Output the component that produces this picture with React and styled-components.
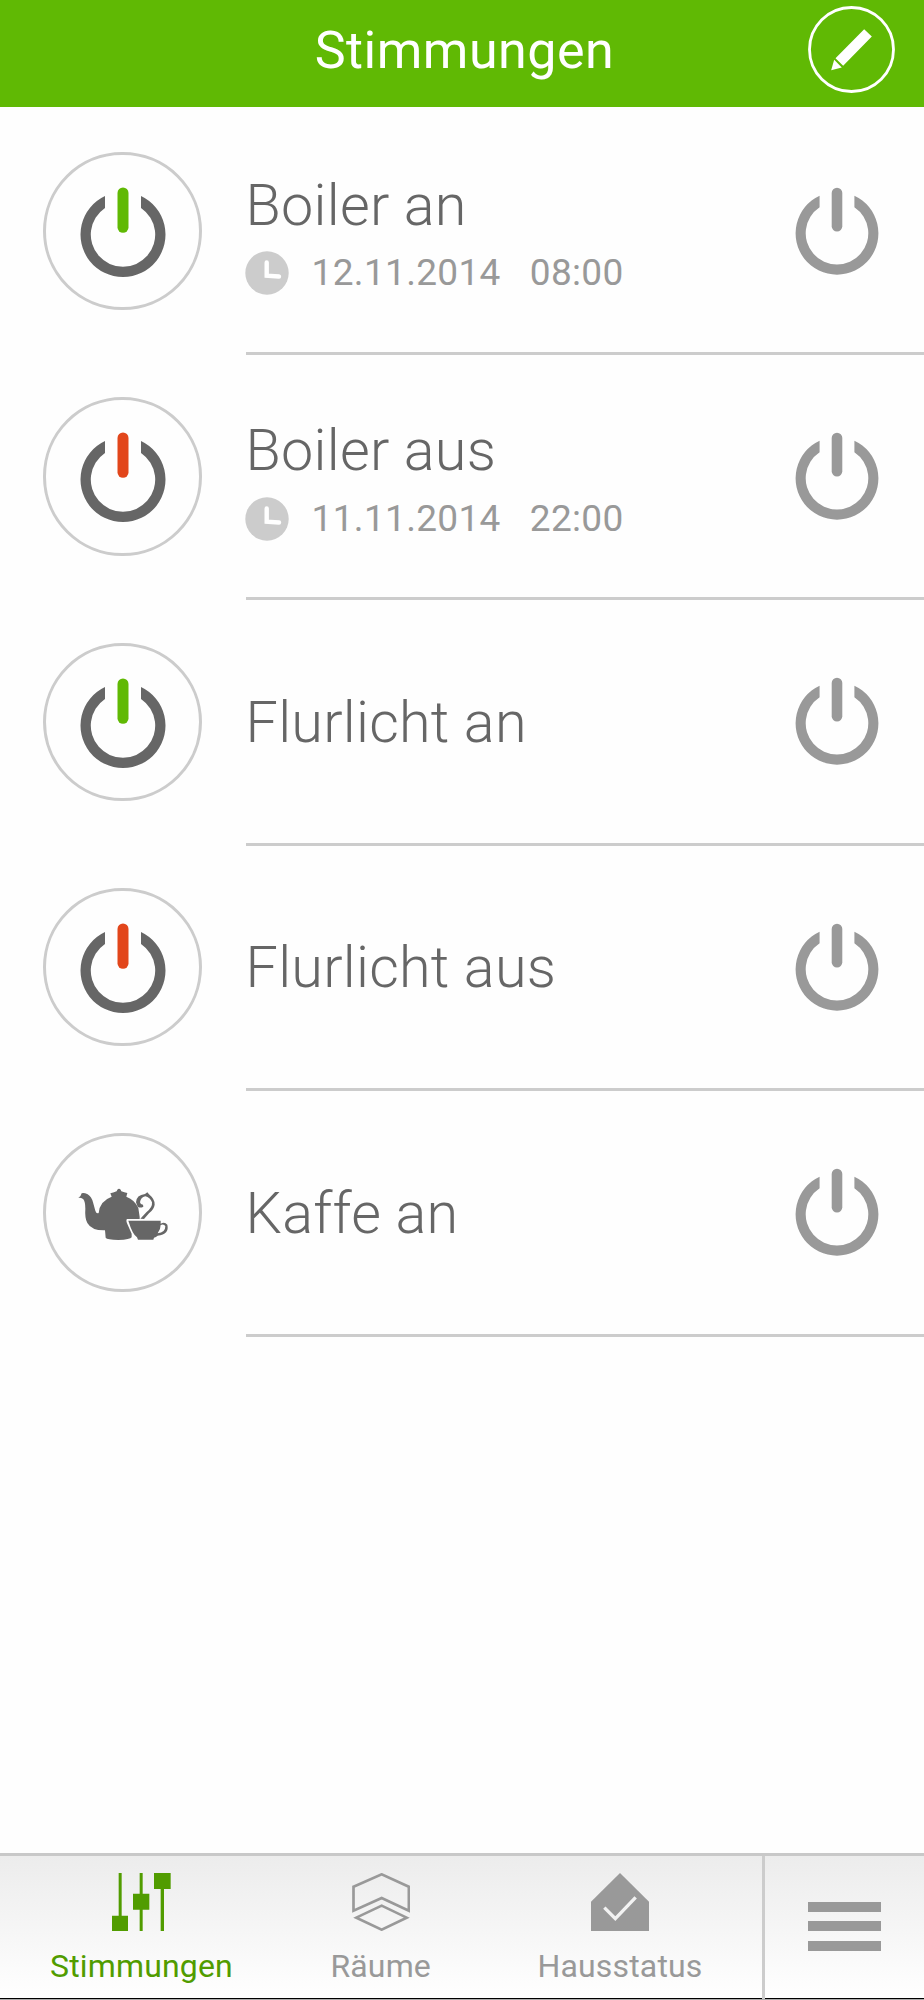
import React from 'react';
import styled, { createGlobalStyle } from 'styled-components';

const GlobalStyle = createGlobalStyle`
  *, *::before, *::after { box-sizing: border-box; }
  body { margin: 0; background: #fefefe; font-family: Roboto, sans-serif; }
`;

const Screen = styled.div`
  display: flex;
  flex-direction: column;
  width: 924px;
  height: 2000px;
  overflow: hidden;
  background: #fefefe;
`;

const Header = styled.header`
  flex: none;
  display: grid;
  grid-template-columns: 1fr auto 1fr;
  align-items: center;
  height: 106.6px;
  padding: 0 29px 8.6px 34px;
  background: #60b904;
`;

const Title = styled.h1`
  grid-column: 2;
  margin: 3.4px 0 0;
  font-size: 52px;
  line-height: 60px;
  font-weight: 400;
  letter-spacing: 0.5px;
  color: #fff;
`;

const EditButton = styled.button`
  grid-column: 3;
  justify-self: end;
  width: 87px;
  height: 87px;
  padding: 0;
  border: 0;
  background: none;
  svg { display: block; }
`;

const List = styled.main`
  flex: 1;
  padding-top: 2.8px;
`;

const Row = styled.div`
  display: flex;
  height: 245.45px;
  padding-left: 43.4px;
`;

const Badge = styled.div`
  flex: none;
  display: flex;
  align-items: center;
  justify-content: center;
  width: 158.4px;
  height: 158.4px;
  margin: 42.3px 43.8px 0 0;
  border: 3px solid #ccc;
  border-radius: 50%;
  svg { flex: none; }
`;

const RowBody = styled.div`
  flex: 1;
  display: flex;
  align-items: center;
  justify-content: space-between;
  padding-right: 44.6px;
  border-bottom: 3px solid #ccc;
`;

const Texts = styled.div`
  display: flex;
  flex-direction: column;
  gap: 15.5px;
  padding-top: ${(p) => (p.$timed ? '10px' : '2.8px')};
`;

const Name = styled.div`
  font-size: 57.5px;
  line-height: 60px;
  font-weight: 300;
  letter-spacing: 0.25px;
  color: #666;
  white-space: pre;
`;

const Schedule = styled.div`
  display: flex;
  align-items: center;
  height: 44px;
  font-size: 37px;
  line-height: 44px;
  letter-spacing: 0.33px;
  color: #999;
  svg { flex: none; margin: 0 22.6px 0 -0.6px; }
`;

const DateText = styled.span`
  width: 218.2px;
`;

const TimeText = styled.span``;

const Nav = styled.nav`
  flex: none;
  display: flex;
  height: 147.5px;
  border-top: 3px solid #c8c8c8;
  border-bottom: 1px solid #aaa;
  background: linear-gradient(#ececec, #fff);
  box-shadow: inset 0 -2px 0 -1px #000;
`;

const Tabs = styled.div`
  flex: 1;
  display: flex;
  padding: 0 22.2px 0 21.8px;
`;

const Tab = styled.a`
  flex: 1;
  display: flex;
  flex-direction: column;
  align-items: center;
  padding-top: 17.5px;
  color: ${(p) => (p.$active ? '#519c00' : '#999')};
  svg { display: block; flex: none; }
`;

const TabLabel = styled.span`
  margin-top: 15px;
  font-size: 32px;
  line-height: 40px;
  letter-spacing: 0.15px;
`;

const MenuButton = styled.button`
  flex: none;
  display: flex;
  flex-direction: column;
  align-items: center;
  gap: 9.3px;
  width: 162.2px;
  padding: 46.5px 0 0;
  border: 0;
  border-left: 3px solid #ccc;
  background: none;
`;

const MenuBar = styled.span`
  width: 72.6px;
  height: 10px;
  background: #999;
`;

const PencilIcon = () => (
  <svg width="87" height="87" viewBox="84.5 16.5 261 261" fill="#fff">
    <circle cx="215" cy="147" r="126" fill="none" stroke="#fff" strokeWidth="8.5" />
    <path d="M253 86 276 108 190 196 167 173zM163 178 186 201 154 209z" />
  </svg>
);

const PowerBadgeIcon = ({ color }) => (
  <svg width="152" height="152" viewBox="-76 -76 152 152">
    <path d="M-18-34.9A42.5 42.5 0 1 0 18-34.9V-23.1A32.2 32.2 0 1 1-18-23.1Z" fill="#666" />
    <rect x="-5.5" y="-43.6" width="11" height="45.4" rx="5.5" fill={color} />
  </svg>
);

const PowerIcon = () => (
  <svg width="84" height="90" viewBox="-42 -45.3 84 90" fill="#999">
    <path d="M-17.4-35.6A41.4 41.4 0 1 0 17.4-35.6V-24.1A31.3 31.3 0 1 1-17.4-24.1Z" />
    <rect x="-5.3" y="-43.5" width="10.6" height="43.8" rx="5.3" />
  </svg>
);

const TeapotIcon = () => (
  <svg width="152" height="152" viewBox="50 50 456 456" fill="#666">
    <path d="M144 233Q152 228 154 219Q160 216 172 222Q184 230 188 246L195 271Q198 281 205 278Q208 242 244 229L240 219Q248 218 259 213L261 208Q266 203 271 208L273 213Q282 217 291 218L288 229Q314 239 324 263L328 290V296H290Q286 300 291 311L304 340V351Q300 358 264 359Q230 358 226 352L224 330Q184 331 171 308Q163 294 165 265Q165 245 159 237Q154 231 144 233Z" />
    <path d="M317 246Q318 224 344 221L351 216L356 222Q374 237 373 253Q371 267 356 279L341 296L330 295L348 276Q367 261 365 246Q359 231 345 228Q331 231 329 246Q330 253 338 253L339 259Q330 264 322 259Z" />
    <path d="M294 301H391V310Q403 303 411 313Q418 341 382 346Q377 351 371 352L369 358H323L320 351Q306 341 294 301ZM391 314Q391 327 382 339Q405 337 405 318Q401 310 391 314Z" fillRule="evenodd" />
  </svg>
);

const ClockIcon = () => (
  <svg width="44" height="44" viewBox="-22 -22 44 44">
    <circle r="21.7" fill="#ccc" />
    <path d="M-.3-10.5V2.7L12 3.5" fill="none" stroke="#fff" strokeWidth="4.4" strokeLinecap="round" />
  </svg>
);

const SlidersIcon = () => (
  <svg width="59" height="58" viewBox="337 98 177 174" fill="currentColor">
    <path d="M357 98h9v128h19v46h-48v-46h20zM420 98h9v62h20v48h-20v64h-9v-64h-20v-48h20zM463 98h50v48h-20v126h-10V146h-20z" />
  </svg>
);

const RoomsIcon = () => (
  <svg width="58" height="58" viewBox="126 98 174 174" fill="none" stroke="currentColor" strokeWidth="8">
    <path d="M130.500 139 215 102 296.500 139V211L215 173 130.500 211ZM139 232 215 196 290 232 215 268Z" />
  </svg>
);

const HouseIcon = () => (
  <svg width="58" height="58" viewBox="215 98 174 174">
    <path d="M215 184 302 98 389 184V272H215Z" fill="currentColor" />
    <path d="M255 202 288 235 349 171" fill="none" stroke="#f2f2f2" strokeWidth="10" />
  </svg>
);

const scenes = [
  { name: 'Boiler an', date: '12.11.2014', time: '08:00', color: '#60b904' },
  { name: 'Boiler aus', date: '11.11.2014', time: '22:00', color: '#e2461b' },
  { name: 'Flurlicht an', color: '#60b904' },
  { name: 'Flurlicht aus', color: '#e2461b' },
  { name: 'Kaffe an' },
];

export default function App() {
  return (
    <>
      <GlobalStyle />
      <Screen>
        <Header>
          <Title>Stimmungen</Title>
          <EditButton aria-label="Bearbeiten"><PencilIcon /></EditButton>
        </Header>
        <List>
          {scenes.map((s) => (
            <Row key={s.name}>
              <Badge>{s.color ? <PowerBadgeIcon color={s.color} /> : <TeapotIcon />}</Badge>
              <RowBody>
                <Texts $timed={!!s.date}>
                  <Name>{s.name}</Name>
                  {s.date && (
                    <Schedule>
                      <ClockIcon />
                      <DateText>{s.date}</DateText>
                      <TimeText>{s.time}</TimeText>
                    </Schedule>
                  )}
                </Texts>
                <PowerIcon />
              </RowBody>
            </Row>
          ))}
        </List>
        <Nav>
          <Tabs>
            <Tab $active><SlidersIcon /><TabLabel>Stimmungen</TabLabel></Tab>
            <Tab><RoomsIcon /><TabLabel>Räume</TabLabel></Tab>
            <Tab><HouseIcon /><TabLabel>Hausstatus</TabLabel></Tab>
          </Tabs>
          <MenuButton aria-label="Menü"><MenuBar /><MenuBar /><MenuBar /></MenuButton>
        </Nav>
      </Screen>
    </>
  );
}
